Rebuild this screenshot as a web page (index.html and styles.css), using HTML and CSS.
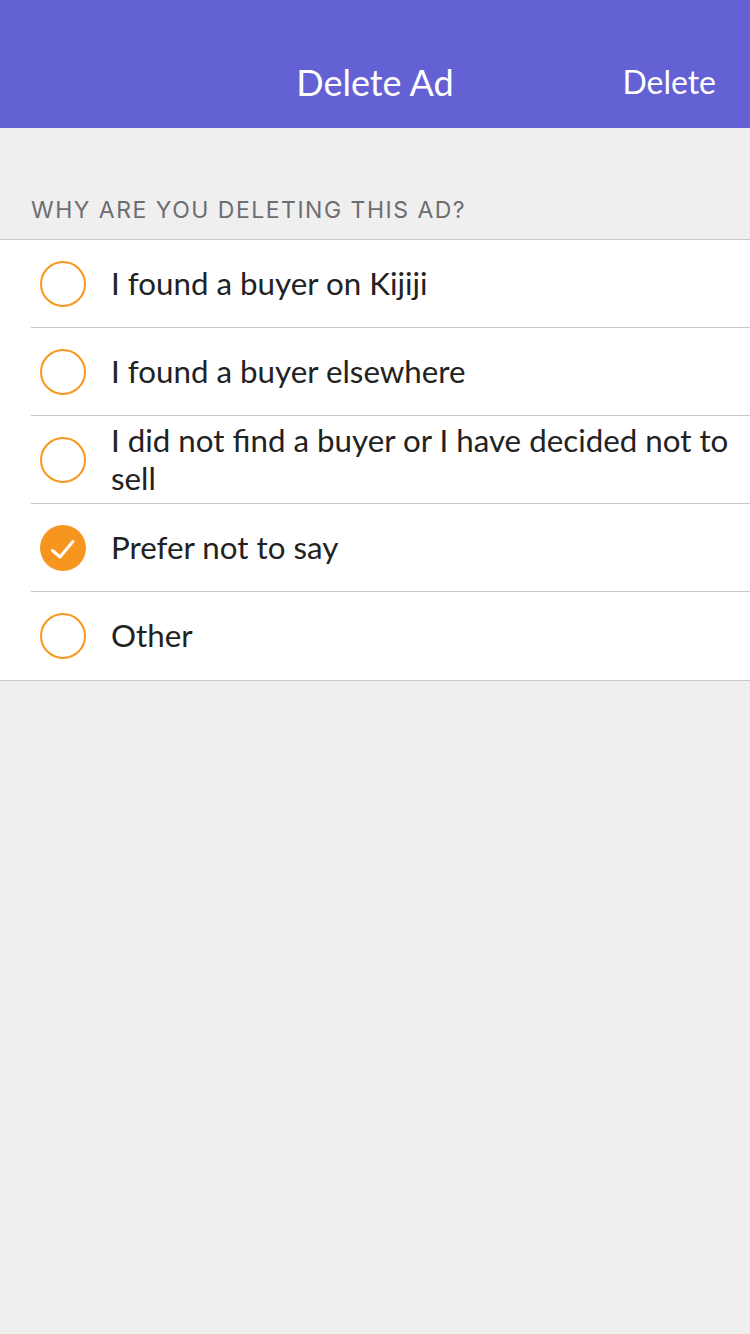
FILE: index.html
```html
<!DOCTYPE html>
<html>
<head>
<meta charset="utf-8">
<link rel="stylesheet" href="styles.css">
</head>
<body>
<header class="nav">
  <div class="nav-side"></div>
  <div class="nav-title">Delete Ad</div>
  <div class="nav-side nav-action">Delete</div>
</header>
<div class="section-label">WHY ARE YOU DELETING THIS AD?</div>
<ul class="list">
  <li class="row"><span class="radio"></span><span class="label">I found a buyer on Kijiji</span></li>
  <li class="row"><span class="radio"></span><span class="label">I found a buyer elsewhere</span></li>
  <li class="row"><span class="radio"></span><span class="label">I did not find a buyer or I have decided not to sell</span></li>
  <li class="row"><span class="radio checked"><svg viewBox="0 0 46 46" width="46" height="46"><path d="M12.5 25.5 L20 32 L33 16.5" fill="none" stroke="#fff" stroke-width="3" stroke-linecap="round" stroke-linejoin="round"/></svg></span><span class="label">Prefer not to say</span></li>
  <li class="row"><span class="radio"></span><span class="label">Other</span></li>
</ul>
</body>
</html>
```
FILE: styles.css
```css
* { box-sizing: border-box; }
html, body { margin: 0; padding: 0; }
body {
  background: #efefef;
  width: 750px;
  height: 1334px;
  font-family: Lato, "Noto Sans", sans-serif;
}
.nav {
  background: #6461d4;
  height: 128px;
  display: flex;
  align-items: flex-end;
  padding: 0 34px 26px 34px;
  color: #fff;
}
.nav-side { flex: 1 1 0; }
.nav-title {
  font-size: 36px;
  line-height: 40px;
  text-align: center;
}
.nav-action {
  text-align: right;
  font-size: 32px;
  line-height: 40px;
}
.section-label {
  font-family: Inter, "Liberation Sans", sans-serif;
  font-size: 23px;
  line-height: 28px;
  color: #6d6d72;
  padding: 68px 0 0 31px;
  height: 111px;
  letter-spacing: 1.5px;
}
.list {
  list-style: none;
  margin: 0;
  padding: 0;
  background: #fff;
  border-top: 1px solid #c8c8cc;
  border-bottom: 1px solid #c8c8cc;
}
.row {
  height: 88px;
  display: flex;
  align-items: center;
  padding-left: 40px;
  position: relative;
}
.row + .row::before {
  content: "";
  position: absolute;
  left: 31px;
  right: 0;
  top: -1px;
  height: 1px;
  background: #c8c8cc;
}
.radio {
  flex: none;
  width: 46px;
  height: 46px;
  border: 2px solid #f7961e;
  border-radius: 50%;
  margin-right: 25px;
  display: flex;
  align-items: center;
  justify-content: center;
}
.radio.checked {
  background: #f7961e;
  border: none;
}
.label {
  font-size: 31.3px;
  line-height: 38px;
  color: #222;
  padding-right: 8px;
  padding-bottom: 3px;
}
```
